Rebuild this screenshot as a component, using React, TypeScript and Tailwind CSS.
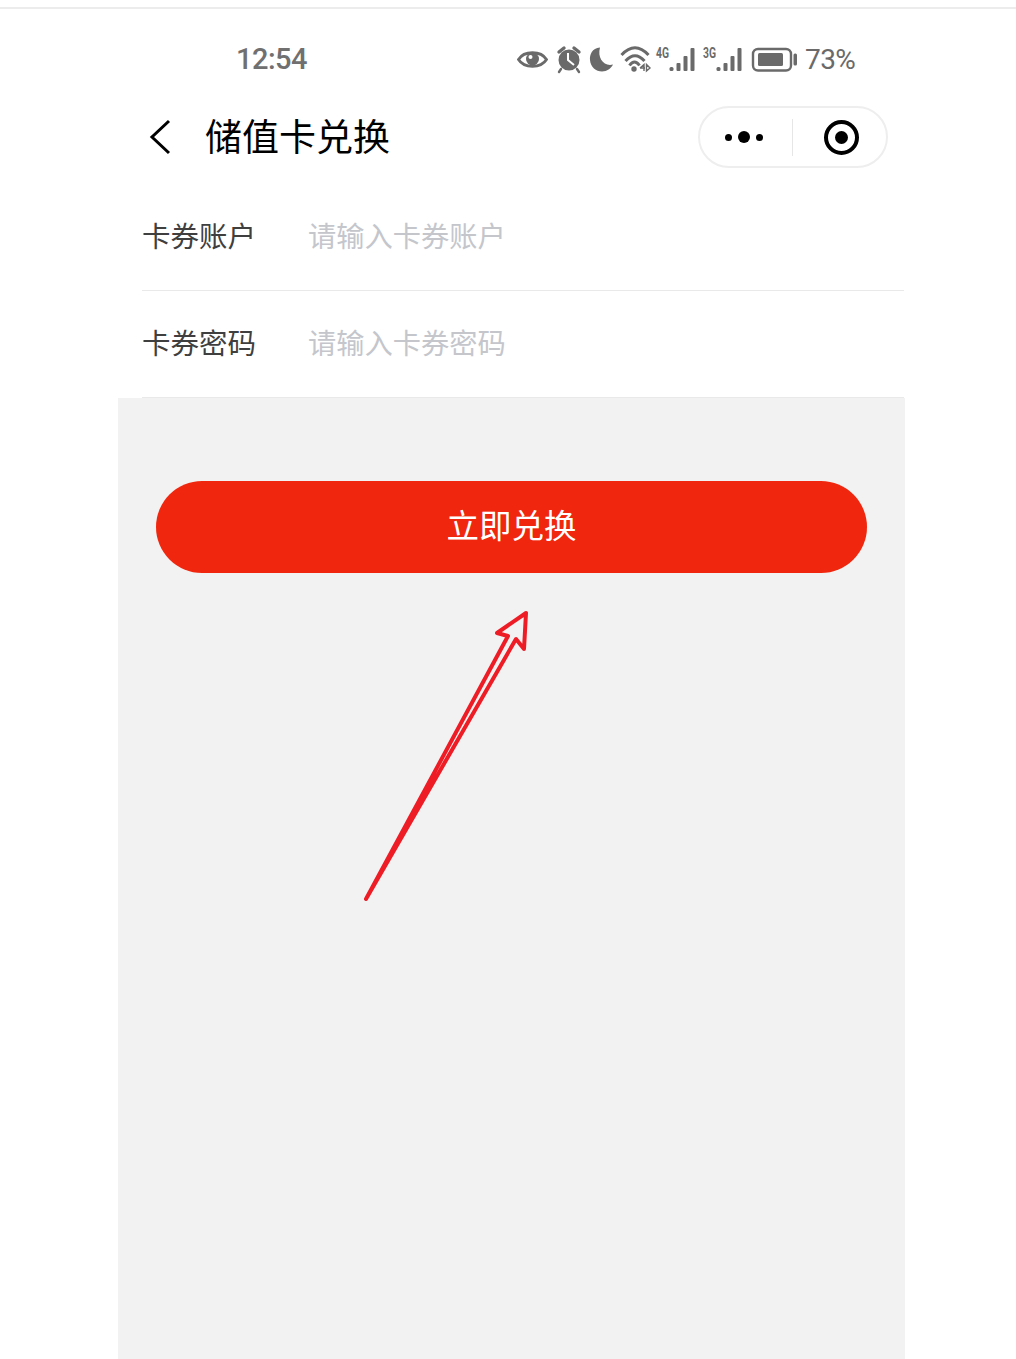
const cjk = { fontFamily: '"Noto Sans CJK SC", "Noto Sans", sans-serif' };

function StatusIcons() {
  return (
    <svg width="282" height="32" viewBox="0 0 282 32" fill="#6a6a6a" className="block">
      {/* eye */}
      <path d="M1.500 15.500 C7 6.500 24 6.500 29.500 15.500 C24 24.500 7 24.500 1.500 15.500 Z" fill="none" stroke="#6a6a6a" strokeWidth="2.800" />
      <circle cx="15.500" cy="15" r="6.500" />
      <circle cx="13.500" cy="13" r="2" fill="#fff" />
      {/* alarm */}
      <circle cx="52" cy="16" r="10.500" />
      <path d="M42 8 L47 4 M62 8 L57 4" stroke="#6a6a6a" strokeWidth="3.400" strokeLinecap="round" />
      <path d="M44 25 L42 28 M60 25 L62 28" stroke="#6a6a6a" strokeWidth="2.400" strokeLinecap="round" />
      <path d="M51 9 L51 16 L57 21" fill="none" stroke="#fff" strokeWidth="2" />
      {/* moon */}
      <path d="M83 3.500 C75 4 72.500 11 73 16 C73.500 23 79 27.500 85 27.500 C90 27.500 94 24.500 96 20.500 C87 23 80 14 83 3.500 Z" />
      {/* wifi */}
      <path d="M104.500 11 Q118 -3.500 131.500 11 M108.500 17 Q118 6.500 127.500 17 M112.500 21.500 Q117.500 14.500 122.500 21.500" fill="none" stroke="#6a6a6a" strokeWidth="3" />
      <circle cx="117" cy="25" r="2.700" />
      <path d="M123 24 L127 20.500 L127 27 M123 24 L128 24 M129.500 20.500 L129.500 27 L133 24 Z" fill="none" stroke="#6a6a6a" strokeWidth="1.400" />
      {/* 4G bars */}
      <text x="139" y="14" fontSize="15" fontWeight="700" fill="#6a6a6a" fontFamily="Roboto, sans-serif" textLength="13" lengthAdjust="spacingAndGlyphs">4G</text>
      <rect x="152.500" y="23" width="4" height="4" rx="1.500" />
      <rect x="159.500" y="19" width="4" height="8" rx="1" />
      <rect x="166.500" y="12" width="4" height="15" rx="1" />
      <rect x="173.500" y="4" width="4" height="23" rx="1" />
      {/* 3G bars */}
      <text x="186" y="14" fontSize="15" fontWeight="700" fill="#6a6a6a" fontFamily="Roboto, sans-serif" textLength="13" lengthAdjust="spacingAndGlyphs">3G</text>
      <rect x="199.500" y="23" width="4" height="4" rx="1.500" />
      <rect x="206.500" y="19" width="4" height="8" rx="1" />
      <rect x="213.500" y="12" width="4" height="15" rx="1" />
      <rect x="220.500" y="4" width="4" height="23" rx="1" />
      {/* battery */}
      <rect x="236" y="5" width="38" height="21.500" rx="5" fill="none" stroke="#6a6a6a" strokeWidth="2.400" />
      <rect x="241" y="9" width="25" height="13" rx="1.500" />
      <rect x="276.500" y="9.500" width="3.500" height="12" rx="1.500" />
    </svg>
  );
}

function FormRow({ label, placeholder }: { label: string; placeholder: string }) {
  return (
    <div className="flex items-center h-[107px] border-b border-[#e9e9e9] pb-[4px]">
      <span className="w-[166px] text-[28.500px] leading-none text-[#3f3f3f]">{label}</span>
      <span className="text-[28.250px] leading-none text-[#c4c6cc]">{placeholder}</span>
    </div>
  );
}

export default function App() {
  return (
    <div className="relative h-[1359px] w-[1016px] overflow-hidden bg-white flex flex-col" style={cjk}>
      <div className="h-[9px] shrink-0 border-b-2 border-[#ececec]" />

      {/* status bar */}
      <div className="flex items-center h-[70px] pt-[31px] shrink-0 pl-[236px]">
        <span className="text-[29px] leading-none font-medium tracking-[-0.5px] text-[#707070] w-[281px]" style={{ fontFamily: 'Roboto, sans-serif' }}>12:54</span>
        <StatusIcons />
        <span className="ml-[6px] text-[28px] leading-none tracking-[-0.6px] text-[#6a6a6a]" style={{ fontFamily: 'Roboto, sans-serif' }}>73%</span>
      </div>

      {/* nav */}
      <div className="flex items-center h-[106px] shrink-0 pl-[149px] pt-[10px]">
        <svg width="22" height="36" viewBox="0 0 22 36" className="block">
          <path d="M20 2 L3 18 L20 34" fill="none" stroke="#000" strokeWidth="3" />
        </svg>
        <h1 className="ml-[34px] pb-[3px] text-[37px] leading-none text-black">储值卡兑换</h1>
        <div className="ml-[308px] flex items-center w-[190px] h-[62px] rounded-full border-2 border-[#eeeeee]">
          <div className="w-[92px] flex items-center justify-center gap-[6px] pr-[4px]">
            <span className="w-[7px] h-[7px] rounded-full bg-black" />
            <span className="w-[12px] h-[12px] rounded-full bg-black" />
            <span className="w-[7px] h-[7px] rounded-full bg-black" />
          </div>
          <div className="w-px h-[37px] bg-[#e6e6e6]" />
          <div className="flex-1 flex items-center justify-center pl-[4px]">
            <span className="flex items-center justify-center w-[35px] h-[35px] rounded-full border-[4px] border-black">
              <span className="w-[13px] h-[13px] rounded-full bg-black" />
            </span>
          </div>
        </div>
      </div>

      {/* form */}
      <div className="ml-[142px] w-[762px] shrink-0 -mt-[1px]">
        <FormRow label="卡券账户" placeholder="请输入卡券账户" />
        <FormRow label="卡券密码" placeholder="请输入卡券密码" />
      </div>

      {/* grey area */}
      <div className="ml-[118px] w-[787px] flex-1 bg-[#f2f2f2] pt-[83px] pl-[38px]">
        <button className="flex items-center justify-center w-[711px] h-[92px] pb-[5px] rounded-full bg-[#f0270e] text-[32.500px] leading-none text-white">
          立即兑换
        </button>
      </div>

      {/* hand drawn arrow annotation */}
      <svg className="absolute left-[350px] top-[600px]" width="190" height="310" viewBox="0 0 190 310">
        <path
          d="M16 299 L158 36 L147 33 L176 13 L174 49 L166 39 Z"
          fill="none"
          stroke="#ee1c25"
          strokeWidth="4"
          strokeLinejoin="round"
        />
      </svg>
    </div>
  );
}
